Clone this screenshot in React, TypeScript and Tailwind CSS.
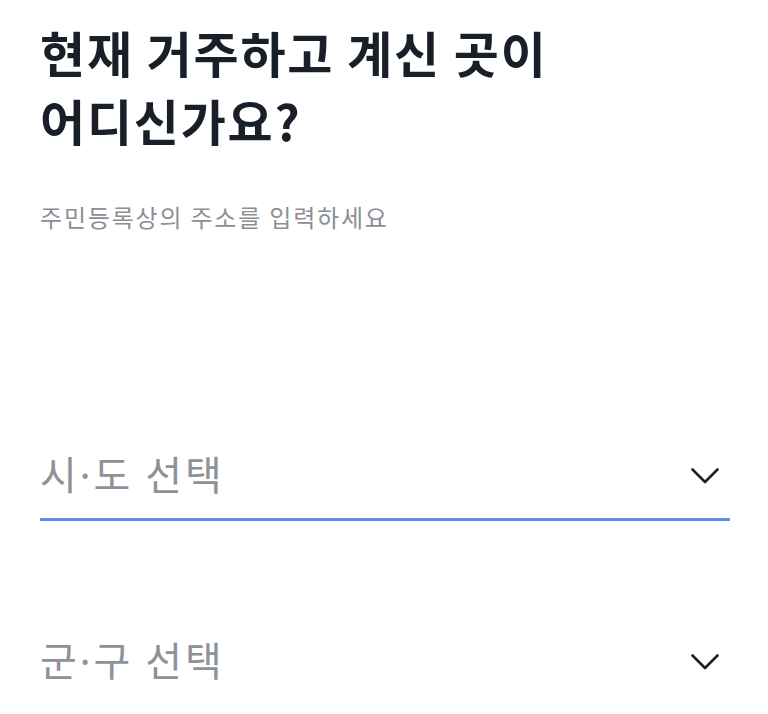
const font = { fontFamily: '"Noto Sans CJK KR", "Noto Sans", sans-serif' };

function Chevron() {
  return (
    <svg width="30" height="18" viewBox="0 0 30 18" fill="none" className="mr-[10px] mt-[4px] text-[#1c1f24]">
      <polyline points="2.5,2.5 15,15 27.5,2.5" stroke="currentColor" strokeWidth="2.6" strokeLinecap="round" strokeLinejoin="round" />
    </svg>
  );
}

function SelectRow({ first, second, active }: { first: string; second: string; active?: boolean }) {
  return (
    <button
      type="button"
      className={
        'flex w-full items-center justify-between pb-[15px] text-left border-b-[3px] ' +
        (active ? 'border-[#5a8ff0]' : 'border-transparent')
      }
    >
      <span className="text-[40px] leading-[56px] tracking-[3px] text-[#8e9196]">
        {first}
        <span style={{ fontFamily: '"Noto Sans", sans-serif' }}>·</span>
        {second} 선택
      </span>
      <Chevron />
    </button>
  );
}

export default function App() {
  return (
    <div className="min-h-screen bg-white pl-10 pr-[38px] pt-[18px]" style={font}>
      <h1 className="text-[49px] font-bold leading-[68px] tracking-[1.8px] text-[#191f28]">
        현재 거주하고 계신 곳이
        <br />
        어디신가요?
      </h1>
      <p className="mt-[47px] text-[24px] leading-[32px] tracking-[1.8px] text-[#8b8f95]">주민등록상의 주소를 입력하세요</p>

      <div className="mt-[212px] flex flex-col gap-[110px]">
        <SelectRow first="시" second="도" active />
        <SelectRow first="군" second="구" />
      </div>
    </div>
  );
}
